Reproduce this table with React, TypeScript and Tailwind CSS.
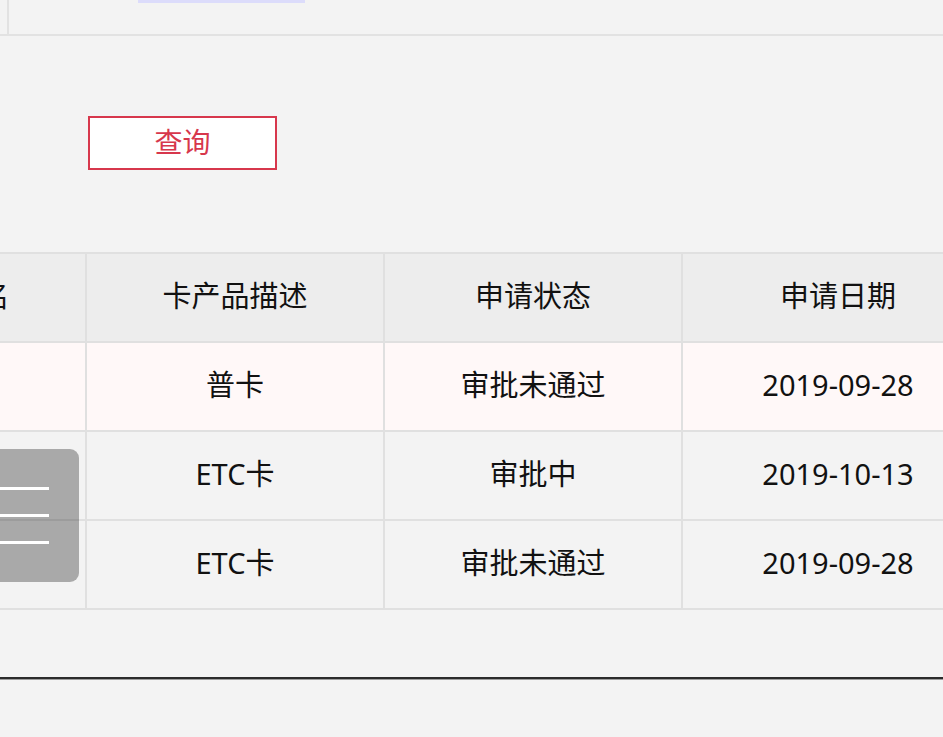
import React from "react";

const font = { fontFamily: '"Noto Sans", "Noto Sans CJK SC", sans-serif' };

const headers = ["申请人姓名", "卡产品描述", "申请状态", "申请日期"];

const rows = [
  { name: "", product: "普卡", status: "审批未通过", date: "2019-09-28", bg: "bg-[#fff8f8]" },
  { name: "", product: "ETC卡", status: "审批中", date: "2019-10-13", bg: "bg-[#f3f3f3]" },
  { name: "", product: "ETC卡", status: "审批未通过", date: "2019-09-28", bg: "bg-[#f3f3f3]" },
];

function Cell({ children, last }: { children?: React.ReactNode; last?: boolean }) {
  return (
    <div className={`flex shrink-0 items-center justify-center pb-[4px] ${last ? "w-[310px]" : "w-[298px] border-r-2 border-[#e0e0e0]"}`}>
      {children}
    </div>
  );
}

export default function App() {
  return (
    <div className="relative h-[737px] w-[943px] overflow-hidden bg-[#f3f3f3] text-[29px] text-[#111]" style={font}>
      {/* top strip */}
      <div className="relative h-[36px] border-b-2 border-[#e2e2e2]">
        <div className="ml-[7px] h-full border-l-2 border-[#e2e2e2]" />
        <div className="absolute left-[138px] top-0 h-[3px] w-[167px] bg-[#dcdcfb]" />
      </div>

      {/* query */}
      <div className="h-[216px] pl-[88px] pt-[80px]">
        <button className="flex h-[54px] w-[189px] items-center justify-center border-2 border-[#d7374c] bg-white pb-[2px] text-[28px] text-[#d7374c]">
          查询
        </button>
      </div>

      {/* table */}
      <div className="ml-[-211px] w-[1300px] border-t-2 border-[#e0e0e0]">
        <div className="flex h-[89px] border-b-2 border-[#e0e0e0] bg-[#ededed]">
          {headers.map((h, i) => (
            <Cell key={h} last={i === headers.length - 1}>
              {h}
            </Cell>
          ))}
        </div>
        {rows.map((r, i) => (
          <div key={i} className={`flex h-[89px] border-b-2 border-[#e0e0e0] ${r.bg}`}>
            <Cell>{r.name}</Cell>
            <Cell>{r.product}</Cell>
            <Cell>{r.status}</Cell>
            <Cell last>{r.date}</Cell>
          </div>
        ))}
      </div>

      {/* footer rule */}
      <div className="mt-[67px] border-t-2 border-[#2b2b2b]" />
      <div className="h-px bg-[#9c9c9c]" />

      {/* floating menu button */}
      <div className="absolute left-[-52px] top-[449px] flex h-[133px] w-[131px] flex-col items-end justify-center gap-[24px] rounded-[9px] bg-black/30 pr-[30px]">
        <span className="block h-[3px] w-[70px] bg-white" />
        <span className="block h-[3px] w-[70px] bg-white" />
        <span className="block h-[3px] w-[70px] bg-white" />
      </div>
    </div>
  );
}
